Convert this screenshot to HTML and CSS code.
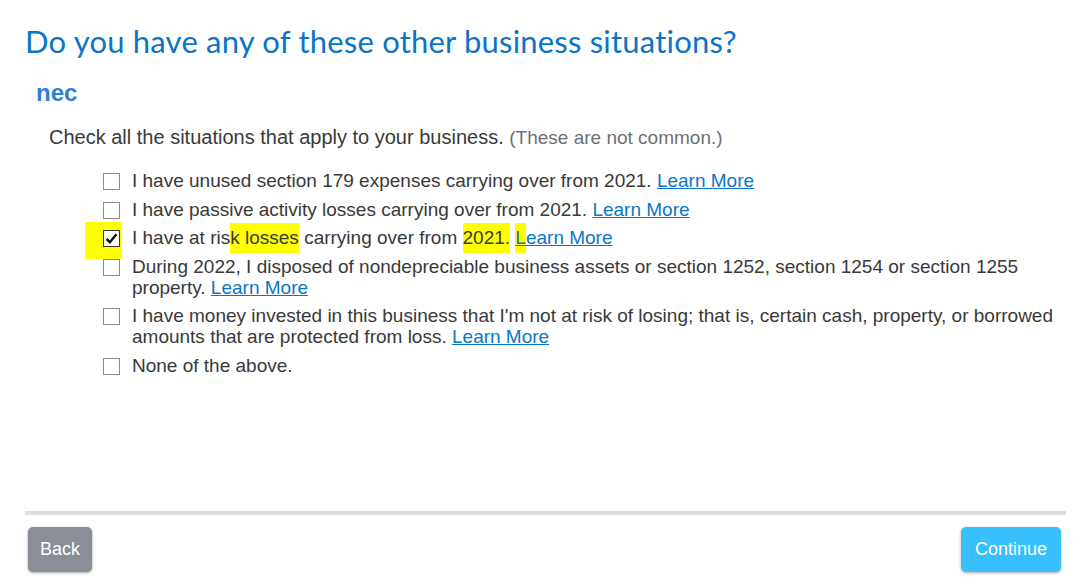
FILE: index.html
```html
<!DOCTYPE html>
<html lang="en">
<head>
    <meta charset="UTF-8">
    <meta name="viewport" content="width=device-width, initial-scale=1.0">
    <title>Other Business Situations</title>
    <link rel="stylesheet" href="styles.css">
</head>
<body>
    <div class="page">
        <h1>Do you have any of these other business situations?</h1>
        <h2>nec</h2>
        <p class="intro">Check all the situations that apply to your business. <span class="note">(These are not common.)</span></p>

        <ul class="options">
            <li>
                <span class="box"></span>
                <span class="label">I have unused section 179 expenses carrying over from 2021. <a href="#">Learn More</a></span>
            </li>
            <li>
                <span class="box"></span>
                <span class="label">I have passive activity losses carrying over from 2021. <a href="#">Learn More</a></span>
            </li>
            <li>
                <span class="box checked">
                    <svg width="13" height="13" viewBox="0 0 13 13"><path d="M1.5 6.8 L4.8 10.2 L11.5 2.2" fill="none" stroke="#111" stroke-width="2.4"/></svg>
                </span>
                <span class="label">I have at ris<mark>k losses</mark> carrying over from <mark>2021.</mark> <a href="#"><mark>L</mark>earn More</a></span>
            </li>
            <li>
                <span class="box"></span>
                <span class="label">During 2022, I disposed of nondepreciable business assets or section 1252, section 1254 or section 1255 property. <a href="#">Learn More</a></span>
            </li>
            <li>
                <span class="box"></span>
                <span class="label">I have money invested in this business that I'm not at risk of losing; that is, certain cash, property, or borrowed amounts that are protected from loss. <a href="#">Learn More</a></span>
            </li>
            <li>
                <span class="box"></span>
                <span class="label">None of the above.</span>
            </li>
        </ul>

        <div class="footer">
            <button class="back">Back</button>
            <button class="continue">Continue</button>
        </div>
    </div>
</body>
</html>
```

FILE: styles.css
```css
body {
    margin: 0;
    font-family: "Liberation Sans", Arial, sans-serif;
    color: #393939;
    background: #fff;
}

.page {
    width: 1041px;
    padding: 0 16px 0 25px;
    height: 587px;
    display: flex;
    flex-direction: column;
}

h1 {
    font-family: Lato, "Open Sans", sans-serif;
    font-weight: 400;
    font-size: 31px;
    line-height: 36px;
    color: #0a74c6;
    margin: 23px 0 0;
    letter-spacing: 0.2px;
}

h2 {
    font-size: 24px;
    font-weight: bold;
    color: #2f7fd9;
    margin: 20px 0 0 11px;
    line-height: 28px;
}

.intro {
    font-size: 20px;
    line-height: 24px;
    margin: 18px 0 0 24px;
}

.note {
    font-size: 19px;
    color: #707070;
}

.options {
    list-style: none;
    margin: 20px 0 0 78px;
    padding: 0;
}

.options li {
    display: flex;
    align-items: flex-start;
    font-size: 19px;
    line-height: 21px;
    margin-bottom: 7.5px;
}

.box {
    flex: none;
    width: 15px;
    height: 15px;
    border: 1px solid #8a8a8a;
    background: #fff;
    margin: 3px 12px 0 0;
    display: flex;
    align-items: center;
    justify-content: center;
}

.box.checked {
    border-color: #333;
    box-shadow: -8px 2px 0 10px #ffff00;
}

.label {
    flex: 1;
}

mark {
    background: #ffff00;
    color: inherit;
    padding: 4px 0 5px;
}

a {
    color: #0b76c9;
    text-decoration: underline;
}

.footer {
    margin-top: auto;
    border-top: 4px solid #dedede;
    display: flex;
    justify-content: space-between;
    padding: 12px 5px 15px 3px;
}

button {
    font-family: "Liberation Sans", Arial, sans-serif;
    font-size: 18px;
    color: #fff;
    border: none;
    border-radius: 5px;
    height: 45px;
    box-shadow: 0 1px 3px rgba(0, 0, 0, 0.35);
    cursor: pointer;
}

.back {
    background: #8a8e97;
    width: 64px;
}

.continue {
    background: #37c0fc;
    width: 100px;
}
```
